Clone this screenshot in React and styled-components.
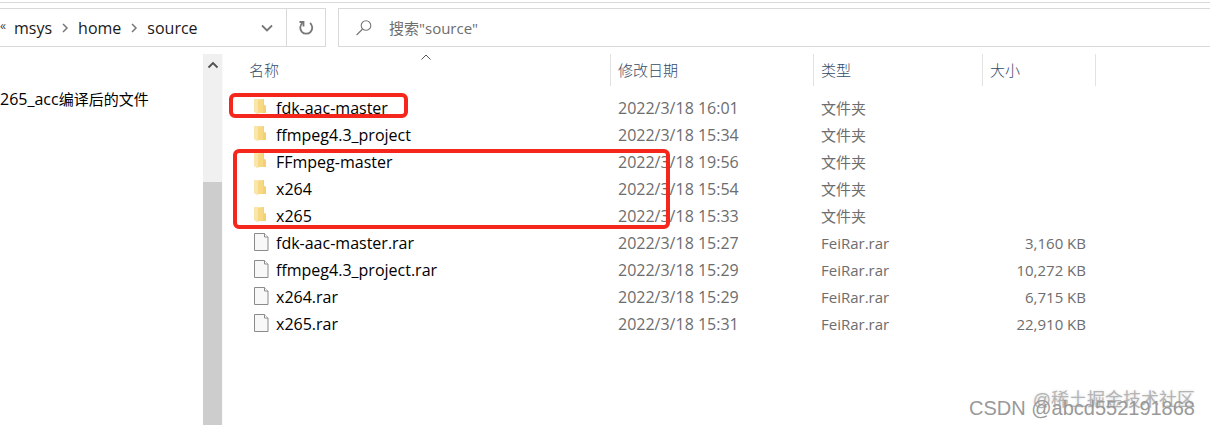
import React from 'react';
import styled, { createGlobalStyle } from 'styled-components';

const files = [
  { name: 'fdk-aac-master', date: '2022/3/18 16:01', folder: true },
  { name: 'ffmpeg4.3_project', date: '2022/3/18 15:34', folder: true },
  { name: 'FFmpeg-master', date: '2022/3/18 19:56', folder: true },
  { name: 'x264', date: '2022/3/18 15:54', folder: true },
  { name: 'x265', date: '2022/3/18 15:33', folder: true },
  { name: 'fdk-aac-master.rar', date: '2022/3/18 15:27', size: '3,160 KB' },
  { name: 'ffmpeg4.3_project.rar', date: '2022/3/18 15:29', size: '10,272 KB' },
  { name: 'x264.rar', date: '2022/3/18 15:29', size: '6,715 KB' },
  { name: 'x265.rar', date: '2022/3/18 15:31', size: '22,910 KB' },
];

const FolderIcon = () => (
  <svg width="14" height="18" viewBox="0 0 14 18" aria-hidden="true">
    <path d="M0 1h10v14H4l-1 1-3-2z" fill="#fae6ac" />
    <path d="M4 2l6-1v6l2 1v7H5l-2 1 1-2z" fill="#f8d983" />
    <path d="M9 1h1v6l2 1v7H9z" fill="#f5d073" />
  </svg>
);

const FileIcon = () => (
  <svg width="15" height="18" viewBox="0 0 15 18" aria-hidden="true">
    <path d="M.5.5h10l3.500 3.500v13.500H.5z" fill="#f8f8f8" stroke="#8b8b8b" />
    <path d="M10.500.5v3.500H14" fill="#fff" stroke="#8b8b8b" />
  </svg>
);

const Chevron = ({ dir, size = 12, width = 1.5 }) => {
  const paths = {
    right: 'M4 2l4 4-4 4',
    down: 'M1 3.500l5 5 5-5',
    up: 'M1.500 8.500L6 4l4.500 4.500',
  };
  return (
    <svg width={size} height={size} viewBox="0 0 12 12" fill="none" aria-hidden="true">
      <path d={paths[dir]} stroke="currentColor" strokeWidth={width} />
    </svg>
  );
};

const RefreshIcon = () => (
  <svg width="16" height="16" viewBox="0 0 16 16" fill="none" stroke="#777" strokeWidth="1.8" aria-hidden="true">
    <path d="M12 3A6 6 0 1 1 4.500 3" />
    <path d="M1.500 2h4v4.500" />
  </svg>
);

const SearchIcon = () => (
  <svg width="16" height="16" viewBox="0 0 16 16" fill="none" stroke="#777" strokeWidth="1.1" aria-hidden="true">
    <circle cx="10" cy="5.500" r="4.800" />
    <path d="M6.600 9L.6 15" />
  </svg>
);

const App = () => {
  return (
    <>
      <GlobalStyle />
      <Window>
        <Toolbar>
          <AddressBar>
            <Crumbs aria-label="路径">
              <More>«</More>
              <Crumb href="#msys">msys</Crumb>
              <Chevron dir="right" />
              <Crumb href="#home">home</Crumb>
              <Chevron dir="right" />
              <Crumb href="#source">source</Crumb>
            </Crumbs>
            <BarButton aria-label="历史记录"><Chevron dir="down" width={1.8} /></BarButton>
            <BarButton $divided aria-label="刷新"><RefreshIcon /></BarButton>
          </AddressBar>
          <SearchBox>
            <SearchIcon />
            <input type="text" aria-label="搜索" placeholder={'搜索"source"'} />
          </SearchBox>
        </Toolbar>
        <Main>
          <Sidebar>
            <TreeItem href="#tree">265_acc<Han>编译后的文件</Han></TreeItem>
          </Sidebar>
          <ScrollTrack>
            <ScrollButton aria-label="向上滚动"><Chevron dir="up" width={1.8} /></ScrollButton>
            <ScrollThumb />
          </ScrollTrack>
          <Content>
            <FileTable>
              <colgroup>
                <Col $w={388} />
                <Col $w={203} />
                <Col $w={169} />
                <Col $w={113} />
                <col />
              </colgroup>
              <thead>
                <tr>
                  <HeadCell $name>
                    <div>名称</div>
                    <SortMark><Chevron dir="up" width={1} /></SortMark>
                  </HeadCell>
                  <HeadCell><div>修改日期</div></HeadCell>
                  <HeadCell><div>类型</div></HeadCell>
                  <HeadCell><div>大小</div></HeadCell>
                  <td />
                </tr>
              </thead>
              <tbody>
                {files.map((file) => (
                  <tr key={file.name}>
                    <Cell>
                      <NameLabel>
                        <IconSlot>{file.folder ? <FolderIcon /> : <FileIcon />}</IconSlot>
                        {file.name}
                      </NameLabel>
                    </Cell>
                    <Cell>{file.date}</Cell>
                    <Cell $small>{file.folder ? '文件夹' : 'FeiRar.rar'}</Cell>
                    <Cell $small $right>{file.size}</Cell>
                    <td />
                  </tr>
                ))}
              </tbody>
            </FileTable>
            <Marker $x={6} $y={39} $w={179} $h={25} />
            <Marker $x={10} $y={95} $w={437} $h={80} />
          </Content>
        </Main>
        <Watermark $bottom={13} $size={18} $light>@稀土掘金技术社区</Watermark>
        <Watermark $bottom={5} $size={20}>CSDN @abcd552191868</Watermark>
      </Window>
    </>
  );
};

const GlobalStyle = createGlobalStyle`
  * {
    box-sizing: border-box;
  }

  body {
    margin: 0;
    background: #fff;
    color: #000;
    font-family: 'Open Sans', 'Noto Sans CJK SC', sans-serif;
    font-size: 16px;
  }

  button {
    border: none;
    padding: 0;
    background: none;
    font: inherit;
  }

  a {
    color: inherit;
    text-decoration: none;
  }

  svg {
    display: block;
    flex: none;
  }
`;

const Window = styled.div`
  position: relative;
  display: flex;
  flex-direction: column;
  min-height: 100vh;
  padding-top: 2px;
  overflow: hidden;
`;

const Toolbar = styled.div`
  display: flex;
  gap: 12px;
  padding-top: 5px;
  border-top: 1px solid #d9d9d9;
`;

const AddressBar = styled.div`
  display: flex;
  width: 326px;
  height: 39px;
  border: 1px solid #d9d9d9;
  border-left: none;
`;

const Crumbs = styled.nav`
  display: flex;
  flex: 1;
  align-items: center;
  color: #777;
`;

const More = styled.span`
  width: 14px;
  padding-bottom: 4px;
  color: #444;
  font-size: 12px;
`;

const Crumb = styled.a`
  color: #1a1a1a;

  & + svg {
    margin: 0 7px;
  }
`;

const BarButton = styled.button`
  display: flex;
  align-items: center;
  justify-content: center;
  width: ${({ $divided }) => ($divided ? 39 : 38)}px;
  color: #777;
  border-left: ${({ $divided }) => ($divided ? '1px solid #d9d9d9' : 'none')};
`;

const SearchBox = styled.label`
  display: flex;
  flex: 1;
  align-items: center;
  gap: 17px;
  padding-left: 17px;
  border: 1px solid #d9d9d9;
  border-right: none;

  input {
    flex: 1;
    min-width: 0;
    padding: 0;
    border: none;
    outline: none;
    background: none;
    font: inherit;
    font-size: 15px;
  }

  input::placeholder {
    color: #6d6d6d;
    opacity: 1;
  }
`;

const Main = styled.div`
  display: flex;
  flex: 1;
  padding-top: 7px;
`;

const Sidebar = styled.aside`
  width: 203px;
  padding-top: 32px;
`;

const TreeItem = styled.a`
  display: block;
  line-height: 27px;
`;

const Han = styled.span`
  font-size: 15px;
`;

const ScrollTrack = styled.div`
  display: flex;
  flex-direction: column;
  width: 20px;
  background: #f0f0f0;
  border-right: 1px solid #fafafa;
`;

const ScrollButton = styled.button`
  display: flex;
  justify-content: center;
  height: 128px;
  padding-top: 5px;
  color: #505050;
`;

const ScrollThumb = styled.div`
  flex: 1;
  background: #cdcdcd;
`;

const Content = styled.main`
  position: relative;
  flex: 1;
`;

const FileTable = styled.table`
  width: 100%;
  table-layout: fixed;
  border-collapse: collapse;
`;

const Col = styled.col`
  width: ${({ $w }) => $w}px;
`;

const HeadCell = styled.th`
  position: relative;
  padding: 0 0 9px;
  color: #344a68;
  font-size: 15px;
  font-weight: 300;
  text-align: left;

  > div {
    height: 32px;
    padding-left: ${({ $name }) => ($name ? 26 : 7)}px;
    border-right: 1px solid #e2e2e2;
    line-height: 32px;
  }
`;

const SortMark = styled.span`
  position: absolute;
  top: -3px;
  left: 197px;
  color: #555;
`;

const Cell = styled.td`
  height: 27px;
  padding: 0 ${({ $right }) => ($right ? 10 : 0)}px 0 7px;
  color: #6d6d6d;
  font-size: ${({ $small }) => ($small ? 15 : 16)}px;
  line-height: 27px;
  text-align: ${({ $right }) => ($right ? 'right' : 'left')};
  white-space: nowrap;
`;

const NameLabel = styled.span`
  display: flex;
  gap: 7px;
  padding-left: 24px;
  color: #000;
`;

const IconSlot = styled.span`
  width: 15px;
  padding-top: 3px;
`;

const Marker = styled.div`
  position: absolute;
  left: ${({ $x }) => $x}px;
  top: ${({ $y }) => $y}px;
  width: ${({ $w }) => $w}px;
  height: ${({ $h }) => $h}px;
  border: 4px solid #f5261c;
  border-radius: 6px;
  pointer-events: none;
`;

const Watermark = styled.div`
  position: absolute;
  right: 15px;
  bottom: ${({ $bottom }) => $bottom}px;
  color: ${({ $light }) => ($light ? '#b4b4b4' : '#999')};
  font-family: 'Liberation Sans', 'Noto Sans CJK SC', sans-serif;
  font-size: ${({ $size }) => $size}px;
  line-height: 24px;
  text-shadow: ${({ $light }) => ($light ? '0 0 3px #ddd' : 'none')};
  white-space: nowrap;
  pointer-events: none;
`;

export default App;
